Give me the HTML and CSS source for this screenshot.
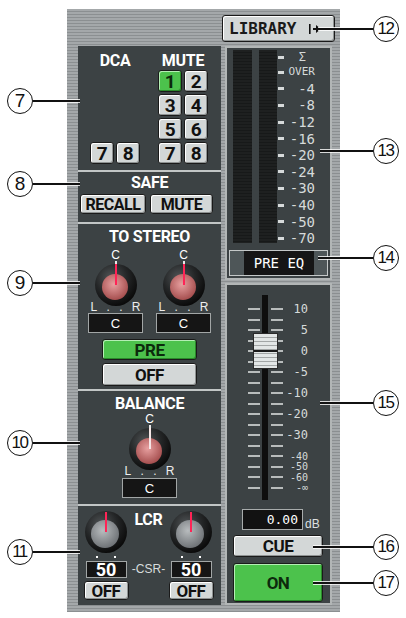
FILE: index.html
```html
<!DOCTYPE html>
<html lang="en">
<head>
    <meta charset="UTF-8">
    <title>Channel Module</title>
    <link rel="stylesheet" href="styles.css">
</head>
<body>
    <svg class="defs" aria-hidden="true">
        <defs>
            <radialGradient id="ringGrad" cx="38%" cy="32%" r="70%">
                <stop offset="0" stop-color="#505456"/>
                <stop offset=".55" stop-color="#242627"/>
                <stop offset="1" stop-color="#0a0a0a"/>
            </radialGradient>
            <radialGradient id="redCap" cx="45%" cy="40%" r="65%">
                <stop offset="0" stop-color="#e7a0a0"/>
                <stop offset="1" stop-color="#a04848"/>
            </radialGradient>
            <radialGradient id="greyCap" cx="42%" cy="38%" r="65%">
                <stop offset="0" stop-color="#b8bcbe"/>
                <stop offset="1" stop-color="#6c7074"/>
            </radialGradient>
        </defs>
    </svg>

    <div class="sheet">
        <div class="console">
            <div class="console-top">
                <button class="btn library">LIBRARY
                    <svg class="lib-icon" viewBox="0 0 12 12" width="12" height="12">
                        <rect x="0" y="1" width="1.6" height="10" fill="#111"/>
                        <rect x="4" y="5" width="4" height="2" fill="#111"/>
                        <polygon points="7,2 12,6 7,10" fill="#111"/>
                    </svg>
                </button>
            </div>

            <div class="console-body">
                <!-- left strip -->
                <div class="strip">
                    <section class="sec sec-dca">
                        <div class="group dca">
                            <div class="label">DCA</div>
                            <div class="grid2">
                                <button class="btn key">7</button>
                                <button class="btn key">8</button>
                            </div>
                        </div>
                        <div class="group mute">
                            <div class="label">MUTE</div>
                            <div class="grid2">
                                <button class="btn key on">1</button>
                                <button class="btn key">2</button>
                                <button class="btn key">3</button>
                                <button class="btn key">4</button>
                                <button class="btn key">5</button>
                                <button class="btn key">6</button>
                                <button class="btn key">7</button>
                                <button class="btn key">8</button>
                            </div>
                        </div>
                    </section>

                    <section class="sec sec-safe">
                        <div class="label">SAFE</div>
                        <div class="safe-row">
                            <button class="btn wide recall">RECALL</button>
                            <button class="btn wide">MUTE</button>
                        </div>
                    </section>

                    <section class="sec sec-stereo">
                        <div class="label">TO STEREO</div>
                        <div class="knob-pair">
                            <div class="knob-col">
                                <div class="knob-c">C</div>
                                <svg class="knob" viewBox="0 0 46 46">
                                    <line x1="23" y1="0" x2="23" y2="4" stroke="#e6e6e6" stroke-width="2"/>
                                    <circle cx="23" cy="24" r="21" fill="url(#ringGrad)"/>
                                    <circle cx="22" cy="26" r="13" fill="url(#redCap)"/>
                                    <line x1="23" y1="3" x2="23" y2="24" stroke="#ff2456" stroke-width="2"/>
                                </svg>
                                <div class="lr"><span>L</span><span>.</span><span>.</span><span>R</span></div>
                                <div class="val">C</div>
                            </div>
                            <div class="knob-col">
                                <div class="knob-c">C</div>
                                <svg class="knob" viewBox="0 0 46 46">
                                    <line x1="23" y1="0" x2="23" y2="4" stroke="#e6e6e6" stroke-width="2"/>
                                    <circle cx="23" cy="24" r="21" fill="url(#ringGrad)"/>
                                    <circle cx="22" cy="26" r="13" fill="url(#redCap)"/>
                                    <line x1="23" y1="3" x2="23" y2="24" stroke="#ff2456" stroke-width="2"/>
                                </svg>
                                <div class="lr"><span>L</span><span>.</span><span>.</span><span>R</span></div>
                                <div class="val">C</div>
                            </div>
                        </div>
                        <button class="btn long on pre">PRE</button>
                        <button class="btn long off">OFF</button>
                    </section>

                    <section class="sec sec-balance">
                        <div class="label">BALANCE</div>
                        <div class="knob-col">
                            <div class="knob-c">C</div>
                            <svg class="knob" viewBox="0 0 46 46">
                                <line x1="23" y1="0" x2="23" y2="4" stroke="#e6e6e6" stroke-width="2"/>
                                <circle cx="23" cy="24" r="21" fill="url(#ringGrad)"/>
                                <circle cx="22" cy="26" r="13" fill="url(#redCap)"/>
                                <line x1="23" y1="3" x2="23" y2="24" stroke="#f6e6e6" stroke-width="2"/>
                            </svg>
                            <div class="lr"><span>L</span><span>.</span><span>.</span><span>R</span></div>
                            <div class="val">C</div>
                        </div>
                    </section>

                    <section class="sec sec-lcr">
                        <div class="lcr-side">
                            <svg class="knob" viewBox="0 0 46 46">
                                <circle cx="23" cy="24" r="21" fill="url(#ringGrad)"/>
                                <circle cx="22" cy="26" r="14" fill="url(#greyCap)"/>
                                <line x1="23" y1="4" x2="23" y2="24" stroke="#ff2456" stroke-width="2"/>
                            </svg>
                            <div class="dots"><i></i><i></i></div>
                            <div class="val val-num">50</div>
                            <button class="btn small-off">OFF</button>
                        </div>
                        <div class="lcr-mid">
                            <div class="label">LCR</div>
                            <div class="csr">-CSR-</div>
                        </div>
                        <div class="lcr-side">
                            <svg class="knob" viewBox="0 0 46 46">
                                <circle cx="23" cy="24" r="21" fill="url(#ringGrad)"/>
                                <circle cx="22" cy="26" r="14" fill="url(#greyCap)"/>
                                <line x1="23" y1="4" x2="23" y2="24" stroke="#ff2456" stroke-width="2"/>
                            </svg>
                            <div class="dots"><i></i><i></i></div>
                            <div class="val val-num">50</div>
                            <button class="btn small-off">OFF</button>
                        </div>
                    </section>
                </div>

                <!-- right side: meter + fader -->
                <div class="side">
                    <div class="meter">
                        <div class="meter-main">
                            <div class="bar"></div>
                            <div class="bar bar2"></div>
                            <div class="scale">
                                <div class="srow first"><i></i><span class="sigma">Σ</span></div>
                                <div class="srow"><i></i><span class="over">OVER</span></div>
                                <div class="srow"><i></i><span>-4</span></div>
                                <div class="srow"><i></i><span>-8</span></div>
                                <div class="srow"><i></i><span>-12</span></div>
                                <div class="srow"><i></i><span>-16</span></div>
                                <div class="srow"><i></i><span>-20</span></div>
                                <div class="srow"><i></i><span>-24</span></div>
                                <div class="srow"><i></i><span>-30</span></div>
                                <div class="srow"><i></i><span>-40</span></div>
                                <div class="srow"><i></i><span>-50</span></div>
                                <div class="srow"><i></i><span>-70</span></div>
                            </div>
                        </div>
                        <div class="pre-eq">
                            <span class="pe-side"></span>
                            <span class="pe-text">PRE EQ</span>
                            <span class="pe-side right"></span>
                        </div>
                    </div>

                    <div class="fader-box">
                        <div class="fader">
                            <div class="frow"><i></i><i></i><span>10</span></div>
                            <div class="frow"><i></i><i></i><span></span></div>
                            <div class="frow"><i></i><i></i><span>5</span></div>
                            <div class="frow"><i></i><i></i><span></span></div>
                            <div class="frow"><i></i><i></i><span>0</span></div>
                            <div class="frow"><i></i><i></i><span></span></div>
                            <div class="frow"><i></i><i></i><span>-5</span></div>
                            <div class="frow"><i></i><i></i><span></span></div>
                            <div class="frow"><i></i><i></i><span>-10</span></div>
                            <div class="frow"><i></i><i></i><span></span></div>
                            <div class="frow"><i></i><i></i><span>-20</span></div>
                            <div class="frow"><i></i><i></i><span></span></div>
                            <div class="frow"><i></i><i></i><span>-30</span></div>
                            <div class="frow"><i></i><i></i><span></span></div>
                            <div class="frow tight"><i></i><i></i><span>-40</span></div>
                            <div class="frow tight"><i></i><i></i><span>-50</span></div>
                            <div class="frow tight"><i></i><i></i><span>-60</span></div>
                            <div class="frow tight"><i></i><i></i><span>-∞</span></div>
                            <div class="fader-cap"></div>
                        </div>
                        <div class="val-row">
                            <div class="db-box">0.00</div>
                            <span class="db">dB</span>
                        </div>
                        <button class="btn cue">CUE</button>
                        <button class="btn on big-on">ON</button>
                    </div>
                </div>
            </div>
        </div>

        <!-- callouts -->
        <div class="callout left c7"><span class="num">7</span><span class="lead"></span></div>
        <div class="callout left c8"><span class="num">8</span><span class="lead"></span></div>
        <div class="callout left c9"><span class="num">9</span><span class="lead"></span></div>
        <div class="callout left c10"><span class="num two">10</span><span class="lead"></span></div>
        <div class="callout left c11"><span class="num two">11</span><span class="lead"></span></div>

        <div class="callout right c12"><span class="lead"></span><span class="num two">12</span></div>
        <div class="callout right c13"><span class="lead"></span><span class="num two">13</span></div>
        <div class="callout right c14"><span class="lead"></span><span class="num two">14</span></div>
        <div class="callout right c15"><span class="lead"></span><span class="num two">15</span></div>
        <div class="callout right c16"><span class="lead"></span><span class="num two">16</span></div>
        <div class="callout right c17"><span class="lead"></span><span class="num two">17</span></div>
    </div>
</body>
</html>
```

FILE: styles.css
```css
:root {
    --panel: #3c4244;
    --edge: #b2b6b6;
    --key: #d3d7d7;
    --green: #4cc24c;
    --ink: #111;
    --scale: #d6dada;
    --cond: "Roboto", "Liberation Sans", sans-serif;
    --mono: "DejaVu Sans Mono", "Liberation Mono", monospace;
}
* {
    box-sizing: border-box;
}
body {
    margin: 0;
    background: #fff;
    font-family: "Liberation Sans", Arial, sans-serif;
}
.defs {
    position: absolute;
    width: 0;
    height: 0;
}
.sheet {
    position: relative;
    width: 406px;
    height: 618px;
    padding-top: 9px;
}
.console {
    width: 273px;
    height: 603px;
    margin-left: 67px;
    padding: 0 8px 7px 11px;
    background: repeating-linear-gradient(#a4a8aa 0 2px, #8b8f91 2px 3px);
}
.console-top {
    height: 37px;
    display: flex;
    justify-content: flex-end;
    align-items: flex-start;
    padding-top: 6px;
    margin-right: -3px;
}
.console-body {
    display: grid;
    grid-template-columns: 143px 107px;
    column-gap: 4px;
    height: 559px;
}

/* buttons */
.btn {
    display: flex;
    align-items: center;
    justify-content: center;
    padding: 0;
    border: 1px solid #1a1a1a;
    border-radius: 3px;
    background: var(--key);
    box-shadow: inset 1px 1px 0 #fff, inset -1px -1px 0 #8e9292;
    font-family: var(--cond);
    font-weight: 700;
    letter-spacing: -0.5px;
    color: var(--ink);
    cursor: pointer;
}
.btn.on {
    background: var(--green);
    box-shadow: inset 1px 1px 0 #b4eeb4, inset -1px -1px 0 #2a8a2a;
    color: #0c2a0c;
}
.library {
    width: 113px;
    height: 27px;
    justify-content: flex-start;
    padding-left: 6px;
    font-family: var(--mono);
    font-size: 16px;
    letter-spacing: 0;
    color: #1a1a1a;
    border-width: 1.5px;
}
.lib-icon {
    margin-left: auto;
    margin-right: 13px;
}

/* left strip */
.strip {
    background: var(--panel);
    display: flex;
    flex-direction: column;
}
.sec + .sec {
    border-top: 2px solid #c2c6c6;
}
.label {
    color: #fff;
    font-family: var(--cond);
    font-weight: 700;
    font-size: 16px;
    line-height: 16px;
    letter-spacing: -0.3px;
    white-space: nowrap;
}
.sec-dca {
    height: 124px;
    display: flex;
    gap: 18px;
    padding: 7px 0 6px 12px;
}
.group {
    display: flex;
    flex-direction: column;
    justify-content: space-between;
    align-items: center;
}
.dca { width: 50px; }
.mute { width: 50px; }
.grid2 {
    display: grid;
    grid-template-columns: 24px 24px;
    gap: 2px;
}
.key {
    height: 22px;
    font-size: 19px;
}

.sec-safe {
    height: 52px;
    padding-top: 3px;
    display: flex;
    flex-direction: column;
    align-items: center;
}
.safe-row {
    display: flex;
    gap: 4px;
    margin-top: 3px;
    align-self: flex-start;
    margin-left: 2px;
}
.wide {
    width: 63px;
    height: 20px;
    font-size: 16px;
}
.wide.recall {
    width: 66px;
}

.sec-stereo {
    height: 167px;
    padding-top: 5px;
    display: flex;
    flex-direction: column;
    align-items: center;
}
.knob-pair {
    display: flex;
    gap: 13px;
    margin-top: 4px;
}
.knob-col {
    width: 55px;
    display: flex;
    flex-direction: column;
    align-items: center;
}
.knob-c {
    color: #fff;
    font-size: 12px;
    line-height: 12px;
    height: 12px;
}
.knob {
    width: 46px;
    height: 46px;
    display: block;
}
.lr {
    width: 50px;
    height: 10px;
    margin-top: -5px;
    display: flex;
    justify-content: space-between;
    color: #eee;
    font-size: 12px;
    line-height: 10px;
}
.val {
    width: 55px;
    height: 20px;
    margin-top: 1px;
    background: #151515;
    border: 1px solid #a2a6a6;
    color: #fff;
    display: flex;
    align-items: center;
    justify-content: center;
    font-size: 13px;
}
.long {
    width: 95px;
    font-size: 17px;
}
.long.pre {
    height: 21px;
    margin-top: 6px;
}
.long.off {
    height: 23px;
    margin-top: 3px;
}

.sec-balance {
    height: 115px;
    padding-top: 5px;
    display: flex;
    flex-direction: column;
    align-items: center;
}
.sec-balance .knob-col {
    margin-top: 1px;
}
.sec-balance .val {
    margin-top: 2px;
}

.sec-lcr {
    height: 101px;
    display: flex;
    padding: 2px 0 0 5px;
}
.lcr-side {
    width: 46px;
    display: flex;
    flex-direction: column;
    align-items: center;
}
.dots {
    height: 6px;
    display: flex;
    align-items: center;
    gap: 16px;
}
.dots i {
    width: 2px;
    height: 2px;
    background: #fff;
}
.val.val-num {
    width: 41px;
    height: 17px;
    margin-top: 1px;
    font-family: var(--cond);
    font-weight: 700;
    font-size: 18px;
}
.small-off {
    width: 45px;
    height: 19px;
    margin-top: 3px;
    font-size: 17px;
}
.lcr-mid {
    width: 39px;
    display: flex;
    flex-direction: column;
    align-items: center;
}
.lcr-mid .label {
    margin-top: 4px;
}
.csr {
    margin-top: 33px;
    height: 17px;
    line-height: 17px;
    color: #d8dcdc;
    font-size: 12px;
    white-space: nowrap;
}

/* right side */
.side {
    display: flex;
    flex-direction: column;
    gap: 3px;
}
.meter {
    height: 234px;
    border: 2px solid var(--edge);
    background: var(--panel);
    padding: 2px 2px 0;
}
.meter-main {
    display: flex;
    height: 193px;
    padding-left: 4px;
}
.bar {
    width: 19px;
    background: repeating-linear-gradient(#1e2020 0 2px, #171919 2px 3px);
}
.bar2 {
    width: 18px;
    margin-left: 7px;
}
.scale {
    margin-left: 1px;
    width: 38px;
}
.srow {
    height: 16.6px;
    display: flex;
    align-items: center;
}
.srow.first {
    height: 14px;
}
.srow i {
    width: 6px;
    height: 3px;
    background: var(--scale);
}
.srow span {
    width: 31px;
    text-align: right;
    color: var(--scale);
    font-family: var(--mono);
    font-size: 14px;
    line-height: 14px;
}
.srow .sigma {
    padding-right: 9px;
    font-size: 12px;
}
.srow .over {
    font-size: 11px;
}
.pre-eq {
    margin-top: 7px;
    height: 26px;
    display: flex;
    border: 1px solid #c4c8c8;
}
.pe-side {
    width: 14px;
    background: #4e5658;
}
.pe-side.right {
    width: 13px;
}
.pe-text {
    flex: 1;
    background: #151515;
    color: #fff;
    font-family: var(--mono);
    font-size: 14px;
    display: flex;
    align-items: center;
    justify-content: center;
}

.fader-box {
    height: 322px;
    border: 2px solid var(--edge);
    background: var(--panel);
}
.fader {
    position: relative;
    height: 205px;
    margin-top: 10px;
    padding-top: 8.75px;
    background: linear-gradient(90deg, transparent 35px, #0e0e0e 35px 41px, transparent 41px);
}
.frow {
    height: 10.5px;
    display: flex;
    align-items: center;
    padding-left: 21px;
}
.frow i {
    width: 12px;
    height: 2px;
    background: #b8bcbc;
}
.frow i + i {
    margin-left: 11px;
}
.frow span {
    width: 25px;
    text-align: right;
    color: var(--scale);
    font-family: var(--mono);
    font-size: 12px;
    line-height: 10px;
}
.frow.tight span {
    font-size: 10px;
    line-height: 9px;
    height: 9px;
}
.fader-cap {
    position: absolute;
    left: 26px;
    top: 38px;
    width: 25px;
    height: 36px;
    border: 1px solid #2a2a2a;
    background:
        linear-gradient(#1a1a1a, #1a1a1a) center / 100% 2px no-repeat,
        repeating-linear-gradient(#e2e6e6 0 3px, #a2a6a6 3px 4px);
}
.val-row {
    display: flex;
    align-items: flex-end;
    margin: 9px 0 0 15px;
}
.db-box {
    width: 61px;
    height: 21px;
    background: #121212;
    border: 1px solid #a8acac;
    color: #fff;
    font-family: var(--mono);
    font-size: 13px;
    line-height: 19px;
    text-align: right;
    padding-right: 4px;
}
.db {
    margin-left: 2px;
    color: #dde0e0;
    font-size: 12px;
    line-height: 11px;
}
.cue {
    width: 90px;
    height: 22px;
    margin: 5px 0 0 6px;
    font-size: 17px;
}
.big-on {
    width: 90px;
    height: 39px;
    margin: 6px 0 0 6px;
    font-size: 17px;
}

/* callouts */
.callout {
    position: absolute;
    display: flex;
    align-items: center;
}
.num {
    width: 26px;
    height: 26px;
    border: 1.5px solid #111;
    border-radius: 50%;
    background: #fff;
    display: flex;
    align-items: center;
    justify-content: center;
    font-size: 19px;
    color: #111;
}
.num.two {
    font-size: 17px;
    letter-spacing: -1.5px;
    padding-right: 1px;
}
.lead {
    height: 2px;
    background: #111;
    box-shadow: 0 1px 0 rgba(255, 255, 255, .8), 0 -1px 0 rgba(255, 255, 255, .8);
}
.callout.left { left: 7px; }
.callout.left .lead { width: 47px; }
.c7 { top: 88px; }
.c8 { top: 171px; }
.c9 { top: 270px; }
.c10 { top: 430px; }
.c11 { top: 539px; }
.c12 { top: 16px; left: 318px; }
.c12 .lead { width: 55px; }
.c13 { top: 138px; left: 320px; }
.c13 .lead { width: 53px; }
.c14 { top: 245px; left: 318px; }
.c14 .lead { width: 55px; }
.c15 { top: 390px; left: 320px; }
.c15 .lead { width: 53px; }
.c16 { top: 534px; left: 313px; }
.c16 .lead { width: 60px; }
.c17 { top: 570px; left: 313px; }
.c17 .lead { width: 60px; }
```
